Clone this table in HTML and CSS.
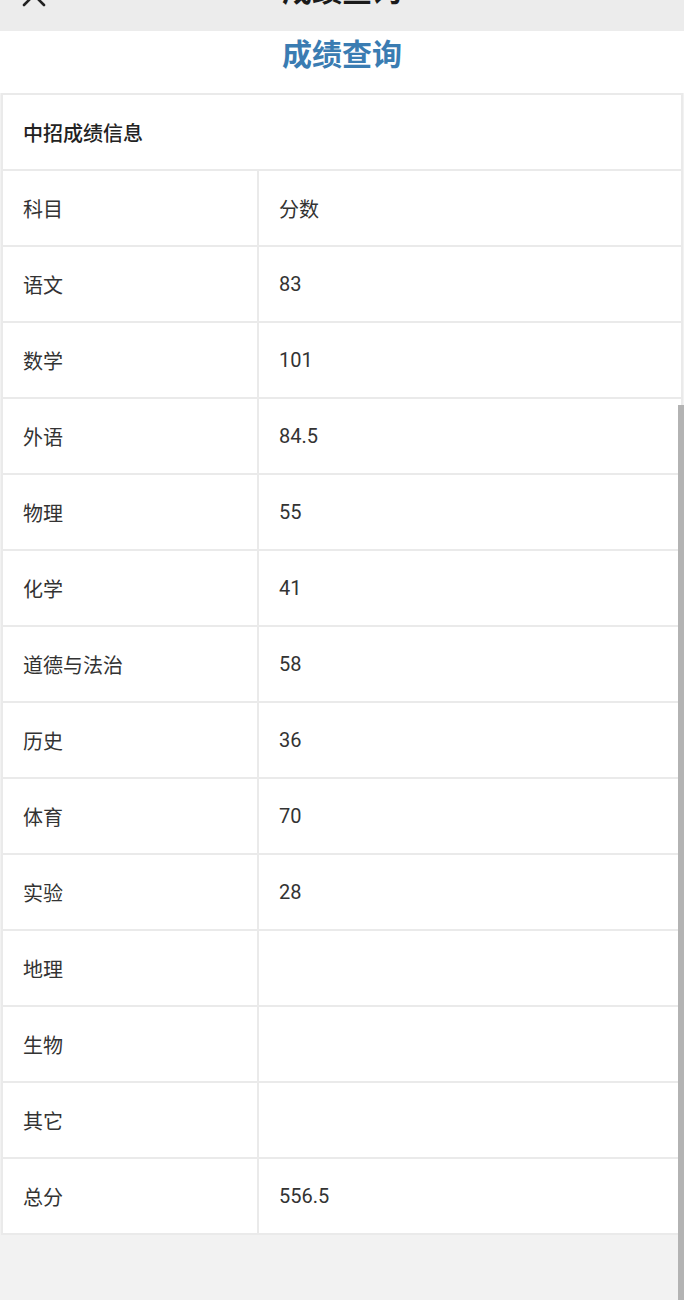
FILE: index.html
```html
<!DOCTYPE html>
<html lang="zh-CN">
<head>
<meta charset="utf-8">
<title>成绩查询</title>
<link rel="stylesheet" href="styles.css">
</head>
<body>
<header class="navbar">
  <div class="navbar-inner">
    <svg class="close-icon" width="28" height="28" viewBox="0 0 28 28"><path d="M4 4 L24 24 M24 4 L4 24" stroke="#222" stroke-width="2.6" stroke-linecap="round" fill="none"/></svg>
    <span class="nav-title">成绩查询</span>
  </div>
</header>
<section class="page-title">成绩查询</section>
<table class="score-table">
  <colgroup><col class="col-subject"><col class="col-score"></colgroup>
  <tr><th colspan="2" class="caption">中招成绩信息</th></tr>
  <tr><td>科目</td><td>分数</td></tr>
  <tr><td>语文</td><td>83</td></tr>
  <tr><td>数学</td><td>101</td></tr>
  <tr><td>外语</td><td>84.5</td></tr>
  <tr><td>物理</td><td>55</td></tr>
  <tr><td>化学</td><td>41</td></tr>
  <tr><td>道德与法治</td><td>58</td></tr>
  <tr><td>历史</td><td>36</td></tr>
  <tr><td>体育</td><td>70</td></tr>
  <tr><td>实验</td><td>28</td></tr>
  <tr><td>地理</td><td></td></tr>
  <tr><td>生物</td><td></td></tr>
  <tr><td>其它</td><td></td></tr>
  <tr><td>总分</td><td>556.5</td></tr>
</table>
<div class="scrollbar"></div>
</body>
</html>
```
FILE: styles.css
```css
html, body {
  margin: 0;
  padding: 0;
}
body {
  background: #f2f2f2;
  font-family: Roboto, "Noto Sans CJK SC", sans-serif;
  color: #333;
  min-height: 1300px;
}
.navbar {
  height: 31px;
  background: #ececec;
  overflow: hidden;
}
.navbar-inner {
  display: flex;
  align-items: center;
  margin-top: -27px;
  height: 30px;
  position: relative;
}
.close-icon {
  margin-left: 20px;
  flex: none;
  align-self: flex-end;
  margin-bottom: -6px;
}
.nav-title {
  position: absolute;
  left: 0;
  right: 0;
  text-align: center;
  font-size: 30px;
  font-weight: 700;
  color: #1a1a1a;
  font-family: "Noto Sans CJK SC", sans-serif;
}
.page-title {
  height: 62px;
  background: #fff;
  text-align: center;
  font-family: "Noto Sans CJK SC", sans-serif;
  font-size: 30px;
  font-weight: 600;
  line-height: 42px;
  color: #3a7cb2;
}
.score-table {
  width: 682px;
  margin-left: 1px;
  border-collapse: collapse;
  background: #fff;
  table-layout: fixed;
}
.col-subject {
  width: 256px;
}
.score-table th,
.score-table td {
  height: 74px;
  padding: 0 0 0 20px;
  border: 2px solid #eaeaea;
  text-align: left;
  font-size: 20px;
  font-weight: 400;
  color: #333;
  font-family: Roboto, "Noto Sans CJK SC", sans-serif;
}
.score-table th.caption {
  font-weight: 500;
  color: #222;
}
.scrollbar {
  position: absolute;
  left: 678px;
  top: 405px;
  width: 6px;
  height: 895px;
  background: #b3b3b3;
}
```
